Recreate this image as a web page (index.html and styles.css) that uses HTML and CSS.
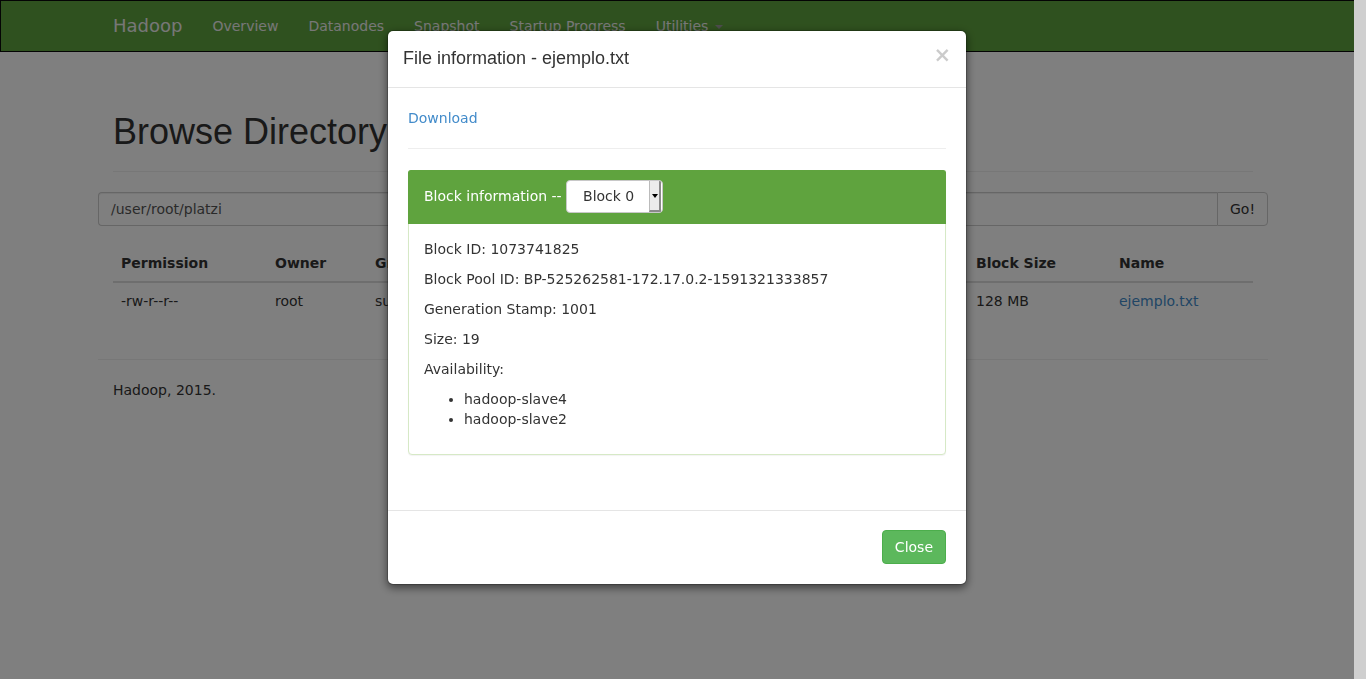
FILE: index.html
```html
<!DOCTYPE html>
<html lang="en">
<head>
<meta charset="utf-8">
<title>Browsing HDFS</title>
<link rel="stylesheet" href="styles.css">
</head>
<body>
<header class="navbar">
  <div class="container nav-container">
    <a class="brand">Hadoop</a>
    <ul class="nav">
      <li><a>Overview</a></li>
      <li><a>Datanodes</a></li>
      <li><a>Snapshot</a></li>
      <li><a>Startup Progress</a></li>
      <li><a>Utilities <span class="caret"></span></a></li>
    </ul>
  </div>
</header>

<main class="container main">
  <div class="page-header"><h1>Browse Directory</h1></div>
  <div class="row">
    <div class="input-group">
      <div class="form-control">/user/root/platzi</div>
      <button class="btn btn-default btn-go">Go!</button>
    </div>
  </div>
  <table class="table">
    <thead>
      <tr>
        <th class="c-perm">Permission</th>
        <th class="c-owner">Owner</th>
        <th class="c-group">Group</th>
        <th class="c-size"></th>
        <th class="c-mod"></th>
        <th class="c-repl"></th>
        <th class="c-bsize">Block Size</th>
        <th class="c-name">Name</th>
      </tr>
    </thead>
    <tbody>
      <tr>
        <td>-rw-r--r--</td>
        <td>root</td>
        <td>supergroup</td>
        <td></td>
        <td></td>
        <td></td>
        <td>128 MB</td>
        <td><a class="link">ejemplo.txt</a></td>
      </tr>
    </tbody>
  </table>
  <div class="row footer">
    <hr>
    <p class="footer-text">Hadoop, 2015.</p>
  </div>
</main>

<div class="backdrop"></div>
<div class="scrollbar"></div>

<div class="modal">
  <div class="modal-dialog">
    <div class="modal-content">
      <div class="modal-header">
        <button class="close">&times;</button>
        <h4 class="modal-title">File information - ejemplo.txt</h4>
      </div>
      <div class="modal-body">
        <div class="download-row"><a class="link">Download</a></div>
        <hr class="modal-hr">
        <div class="panel">
          <div class="panel-heading">
            <span>Block information --</span>
            <span class="select"><span class="select-value">Block 0</span><span class="select-arrow"></span></span>
          </div>
          <div class="panel-body">
            <p>Block ID: 1073741825</p>
            <p>Block Pool ID: BP-525262581-172.17.0.2-1591321333857</p>
            <p>Generation Stamp: 1001</p>
            <p>Size: 19</p>
            <p>Availability:</p>
            <ul>
              <li>hadoop-slave4</li>
              <li>hadoop-slave2</li>
            </ul>
          </div>
        </div>
      </div>
      <div class="modal-footer">
        <button class="btn btn-success">Close</button>
      </div>
    </div>
  </div>
</div>
</body>
</html>
```

FILE: styles.css
```css
* { box-sizing: border-box; }

html, body {
  margin: 0;
  padding: 0;
}

body {
  font-family: "DejaVu Sans", sans-serif;
  font-size: 14px;
  line-height: 20px;
  color: #333;
  background: #fff;
  min-height: 679px;
  overflow: hidden;
}

a { text-decoration: none; cursor: pointer; }
.link { color: #428bca; }

.container {
  width: 1170px;
  margin: 0 auto;
  padding: 0 15px;
}
.main {
  padding-top: 20px;
}

/* Navbar */
.navbar {
  height: 52px;
  background: #5fa33e;
  border: 1px solid #080808;
}
.nav-container {
  display: flex;
  align-items: flex-start;
}
.brand {
  margin-left: -15px;
  padding: 15px;
  font-size: 18px;
  line-height: 20px;
  color: #eee;
}
.nav {
  display: flex;
  list-style: none;
  margin: 0;
  padding: 0;
}
.nav a {
  display: block;
  padding: 15px;
  line-height: 20px;
  color: #eee;
}
.caret {
  display: inline-block;
  width: 0;
  height: 0;
  margin-left: 2px;
  vertical-align: middle;
  border-top: 4px solid #999;
  border-left: 4px solid transparent;
  border-right: 4px solid transparent;
}

/* Page */
.page-header {
  margin: 40px 0 20px;
  padding-bottom: 9px;
  border-bottom: 1px solid #eee;
}
h1 {
  margin: 20px 0 10px;
  font-family: "Liberation Sans", Arial, sans-serif;
  font-size: 36px;
  font-weight: 500;
  line-height: 1.1;
  color: #333;
}
.row {
  margin: 0 -15px;
}
.input-group {
  display: flex;
  height: 34px;
}
.form-control {
  flex: 1;
  height: 34px;
  padding: 6px 12px;
  border: 1px solid #ccc;
  border-right: 0;
  border-radius: 4px 0 0 4px;
  color: #555;
  box-shadow: inset 0 1px 1px rgba(0,0,0,.075);
}
.btn {
  display: inline-block;
  height: 34px;
  padding: 6px 12px;
  font-family: "DejaVu Sans", sans-serif;
  font-size: 14px;
  line-height: 20px;
  border: 1px solid transparent;
  border-radius: 4px;
  cursor: pointer;
}
.btn-default {
  color: #333;
  background: #fff;
  border-color: #ccc;
}
.btn-go {
  border-radius: 0 4px 4px 0;
}
.btn-success {
  color: #fff;
  background: #5cb85c;
  border-color: #4cae4c;
}

.table {
  width: 100%;
  margin-top: 19px;
  margin-bottom: 20px;
  border-collapse: collapse;
  table-layout: fixed;
}
.table th, .table td {
  padding: 8px;
  text-align: left;
  line-height: 20px;
  white-space: nowrap;
  overflow: hidden;
}
.table th {
  font-weight: bold;
  border-bottom: 2px solid #ddd;
}
.table td {
  border-top: 1px solid #ddd;
}
.c-perm { width: 154px; }
.c-owner { width: 100px; }
.c-group { width: 120px; }
.c-size { width: 100px; }
.c-mod { width: 200px; }
.c-repl { width: 181px; }
.c-bsize { width: 143px; }
.c-name { width: 142px; }

hr {
  margin: 20px 0;
  border: 0;
  border-top: 1px solid #eee;
}
.footer {
  display: flow-root;
}
.footer-text {
  margin: 0 0 10px;
  padding: 0 15px;
}

/* Overlay */
.backdrop {
  position: fixed;
  top: 0;
  left: 0;
  right: 12px;
  bottom: 0;
  background: rgba(0,0,0,.5);
}
.scrollbar {
  position: fixed;
  top: 0;
  right: 0;
  bottom: 0;
  width: 12px;
  background: #cfcfcf;
}
.modal {
  position: fixed;
  top: 0;
  left: 0;
  right: 12px;
  bottom: 0;
}
.modal-dialog {
  width: 600px;
  margin: 0 auto;
  padding: 30px 10px;
}
.modal-content {
  background: #fff;
  background-clip: padding-box;
  border: 1px solid rgba(0,0,0,.2);
  border-radius: 6px;
  box-shadow: 0 3px 9px rgba(0,0,0,.5);
}
.modal-header {
  padding: 15px;
  border-bottom: 1px solid #e5e5e5;
}
.modal-title {
  margin: 0;
  font-family: "Liberation Sans", Arial, sans-serif;
  font-size: 18px;
  font-weight: 500;
  line-height: 1.428571;
  color: #333;
}
.close {
  float: right;
  margin-top: -1px;
  padding: 0;
  border: 0;
  background: transparent;
  font-family: "DejaVu Sans", sans-serif;
  font-size: 21px;
  font-weight: bold;
  line-height: 1;
  color: #000;
  opacity: .2;
  text-shadow: 0 1px 0 #fff;
  cursor: pointer;
}
.modal-body {
  padding: 20px;
}
.download-row {
  line-height: 20px;
}
.modal-hr {
  margin-bottom: 21px;
}
.panel {
  margin-bottom: 20px;
  border: 1px solid #d6e9c6;
  border-radius: 4px;
  background: #fff;
  box-shadow: 0 1px 1px rgba(0,0,0,.05);
}
.panel-heading {
  display: flex;
  align-items: center;
  gap: 4px;
  padding: 9px 15px 11px;
  background: #5fa33e;
  color: #fff;
  border-radius: 3px 3px 0 0;
  margin: -1px -1px 0;
  border: 1px solid #5fa33e;
  border-bottom: 0;
}
.select {
  display: inline-flex;
  width: 97px;
  height: 33px;
  background: #fff;
  border: 1px solid #c8c8c8;
  border-radius: 4px;
  color: #333;
  overflow: hidden;
}
.select-value {
  flex: 1;
  text-align: center;
  line-height: 31px;
  padding-left: 2px;
}
.select-arrow {
  position: relative;
  width: 12px;
  margin: 0 1px 0 0;
  background: #ececec;
  border-left: 1px solid #bbb;
  border-right: 2px solid #8a8a8a;
  border-bottom: 2px solid #8a8a8a;
}
.select-arrow::after {
  content: "";
  position: absolute;
  left: 2px;
  top: 13px;
  border-top: 4px solid #000;
  border-left: 3px solid transparent;
  border-right: 3px solid transparent;
}
.panel-body {
  padding: 15px;
}
.panel-body p {
  margin: 0 0 10px;
}
.panel-body ul {
  margin: 0 0 10px;
  padding-left: 40px;
}
.modal-footer {
  margin-top: 15px;
  padding: 19px 20px 20px;
  border-top: 1px solid #e5e5e5;
  text-align: right;
}
```
